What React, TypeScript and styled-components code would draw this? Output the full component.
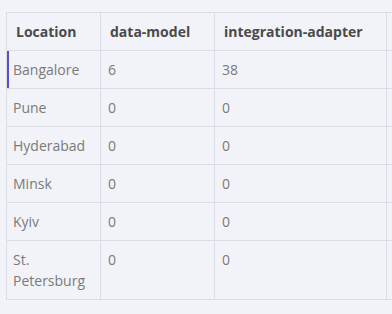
import styled, { createGlobalStyle } from 'styled-components'

const Global = createGlobalStyle`
body {
  margin: 0;
  background: #f1f3f8;
  font-family: "Open Sans", "Liberation Sans", sans-serif;
}
`

const Page = styled.div`
padding: 12px 0 0 6px;
height: 314px;
box-sizing: border-box;
overflow: hidden;
`

const Table = styled.table`
border-collapse: collapse;
table-layout: fixed;
width: 392px;
font-size: 14px;
line-height: 21px;
`

const Head = styled.th<{ w: number }>`
box-sizing: border-box;
width: ${(p) => p.w}px;
text-align: left;
font-weight: 700;
color: #4a4a4a;
padding: 8px 8px 8px 9px;
border: 1px solid #dadde6;
vertical-align: top;
white-space: nowrap;
`

const Cell = styled.td`
color: #7a7a7a;
padding: 8px 8px 8px 7px;
border: 1px solid #dadde6;
vertical-align: top;
`

const Row = styled.tr<{ active?: boolean }>`
& > td:first-child {
  padding-left: 6px;
  box-shadow: ${(p) => (p.active ? 'inset 2px 0 0 #5b4fcf' : 'none')};
}
`

const rows = [
  ['Bangalore', '6', '38'],
  ['Pune', '0', '0'],
  ['Hyderabad', '0', '0'],
  ['Minsk', '0', '0'],
  ['Kyiv', '0', '0'],
  ['St. Petersburg', '0', '0'],
]

function App() {
  return (
    <>
      <Global />
      <Page>
        <Table>
          <thead>
            <tr>
              <Head w={94}>Location</Head>
              <Head w={114}>data-model</Head>
              <Head w={172}>integration-adapter</Head>
              <Head w={12}></Head>
            </tr>
          </thead>
          <tbody>
            {rows.map((r, i) => (
              <Row key={r[0]} active={i === 0}>
                <Cell>{r[0]}</Cell>
                <Cell>{r[1]}</Cell>
                <Cell>{r[2]}</Cell>
                <Cell></Cell>
              </Row>
            ))}
          </tbody>
        </Table>
      </Page>
    </>
  )
}

export default App
